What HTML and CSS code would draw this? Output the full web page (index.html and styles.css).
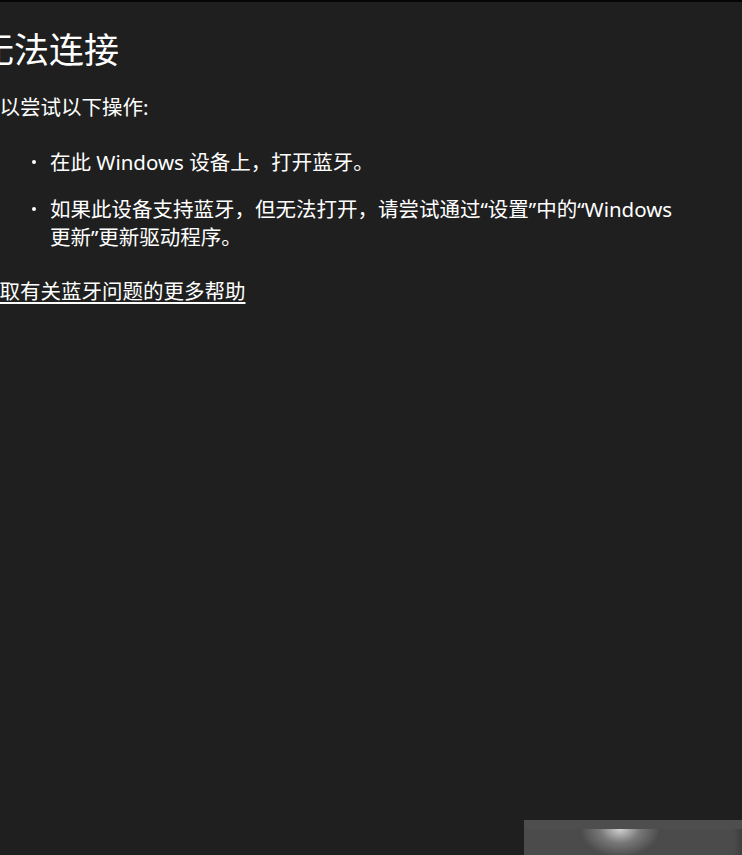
FILE: index.html
```html
<!DOCTYPE html>
<html lang="zh-CN">
<head>
<meta charset="utf-8">
<title>无法连接</title>
<link rel="stylesheet" href="styles.css">
</head>
<body>
<main class="panel">
  <h1 class="title">无法连接</h1>
  <p class="intro">可以尝试以下操作:</p>
  <ul class="steps">
    <li>在此 Windows 设备上，打开蓝牙。</li>
    <li>如果此设备支持蓝牙，但无法打开，请尝试通过“设置”中的“Windows 更新”更新驱动程序。</li>
  </ul>
  <a class="help" href="#">获取有关蓝牙问题的更多帮助</a>
</main>
<div class="corner"><div class="glow"></div></div>
</body>
</html>
```

FILE: styles.css
```css
html, body {
  margin: 0;
  padding: 0;
  height: 100%;
}
body {
  background: #1f1f1f;
  border-top: 2px solid #050505;
  box-sizing: border-box;
  color: #ffffff;
  font-family: "Noto Sans", "Noto Sans CJK SC", sans-serif;
  overflow: hidden;
  position: relative;
}
.panel {
  margin-left: -21px;
  padding-top: 26px;
  width: 711px;
}
.title {
  margin: 0;
  font-size: 35px;
  font-weight: 400;
  line-height: 44px;
}
.intro {
  margin: 21px 0 0;
  font-size: 20.5px;
  line-height: 28px;
}
.steps {
  list-style: none;
  margin: 27px 0 0;
  padding-left: 71px;
  font-size: 20.5px;
  line-height: 28px;
}
.steps li {
  position: relative;
  margin-bottom: 19px;
}
.steps li::before {
  content: "";
  position: absolute;
  left: -18px;
  top: 12px;
  width: 4px;
  height: 4px;
  border-radius: 50%;
  background: #ffffff;
}
.help {
  display: inline-block;
  margin-top: 7px;
  color: #ffffff;
  font-size: 20.5px;
  line-height: 28px;
  text-decoration: underline;
  text-underline-offset: 3px;
}
.corner {
  position: absolute;
  left: 524px;
  top: 818px;
  right: 0;
  bottom: 0;
  background: linear-gradient(to right, #4b4b4b 0, #4b4b4b 96%, #3e3e3e 100%);
  border-top: 9px solid #4e4e4e;
  box-sizing: border-box;
}
.glow {
  position: absolute;
  left: 56px;
  top: 0;
  width: 80px;
  height: 28px;
  background: radial-gradient(ellipse 50% 100% at 50% 0, rgba(255,255,255,0.75) 0, rgba(255,255,255,0.25) 50%, rgba(255,255,255,0) 100%);
}
```
